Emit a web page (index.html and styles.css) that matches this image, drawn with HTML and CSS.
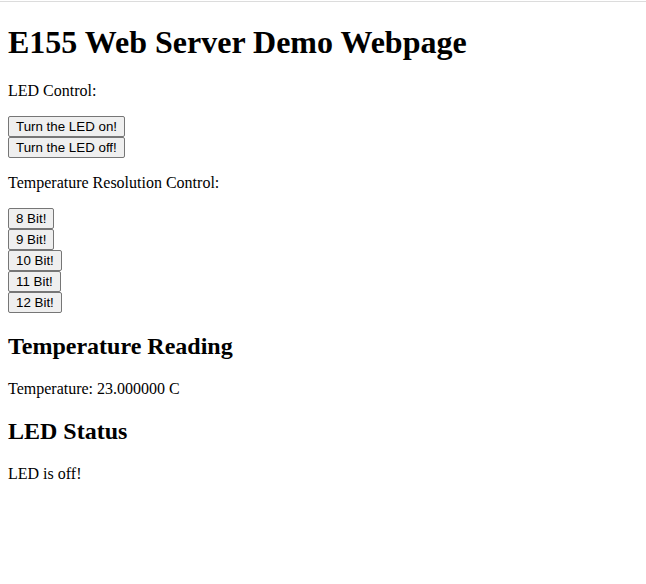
FILE: index.html
```html
<!DOCTYPE html>
<html>
<head>
<meta charset="utf-8">
<title>E155 Web Server Demo Webpage</title>
<link rel="stylesheet" href="styles.css">
</head>
<body>
<div class="topline"></div>
<main class="page">
<h1>E155 Web Server Demo Webpage</h1>
<p>LED Control:</p>
<form class="btn-form"><button type="button" class="btn">Turn the LED on!</button></form>
<form class="btn-form"><button type="button" class="btn">Turn the LED off!</button></form>
<p>Temperature Resolution Control:</p>
<form class="btn-form"><button type="button" class="btn">8 Bit!</button></form>
<form class="btn-form"><button type="button" class="btn">9 Bit!</button></form>
<form class="btn-form"><button type="button" class="btn">10 Bit!</button></form>
<form class="btn-form"><button type="button" class="btn">11 Bit!</button></form>
<form class="btn-form"><button type="button" class="btn">12 Bit!</button></form>
<h2>Temperature Reading</h2>
<p>Temperature: 23.000000 C</p>
<h2>LED Status</h2>
<p>LED is off!</p>
</main>
</body>
</html>
```

FILE: styles.css
```css
html {
  background: #fff;
}
body {
  margin: 0;
  font-family: "Liberation Serif", "Times New Roman", serif;
  font-size: 16px;
  color: #000;
}
.topline {
  height: 1px;
  margin-top: 1px;
  background: #dcdcdc;
}
.page {
  display: block;
  padding: 0 8px 8px;
}
h1 {
  font-size: 32px;
  margin: 22px 0 21.44px;
}
h2 {
  font-size: 24px;
  margin: 19.92px 0;
}
p {
  margin: 16px 0;
}
.btn-form {
  margin: 0;
}
.btn {
  font-family: "Liberation Sans", Arial, sans-serif;
  font-size: 13.333px;
  color: #000;
  background: #efefef;
  border: 1px solid #767676;
  border-radius: 2px;
  padding: 1px 7px;
  height: 21px;
  line-height: 15px;
}
```
